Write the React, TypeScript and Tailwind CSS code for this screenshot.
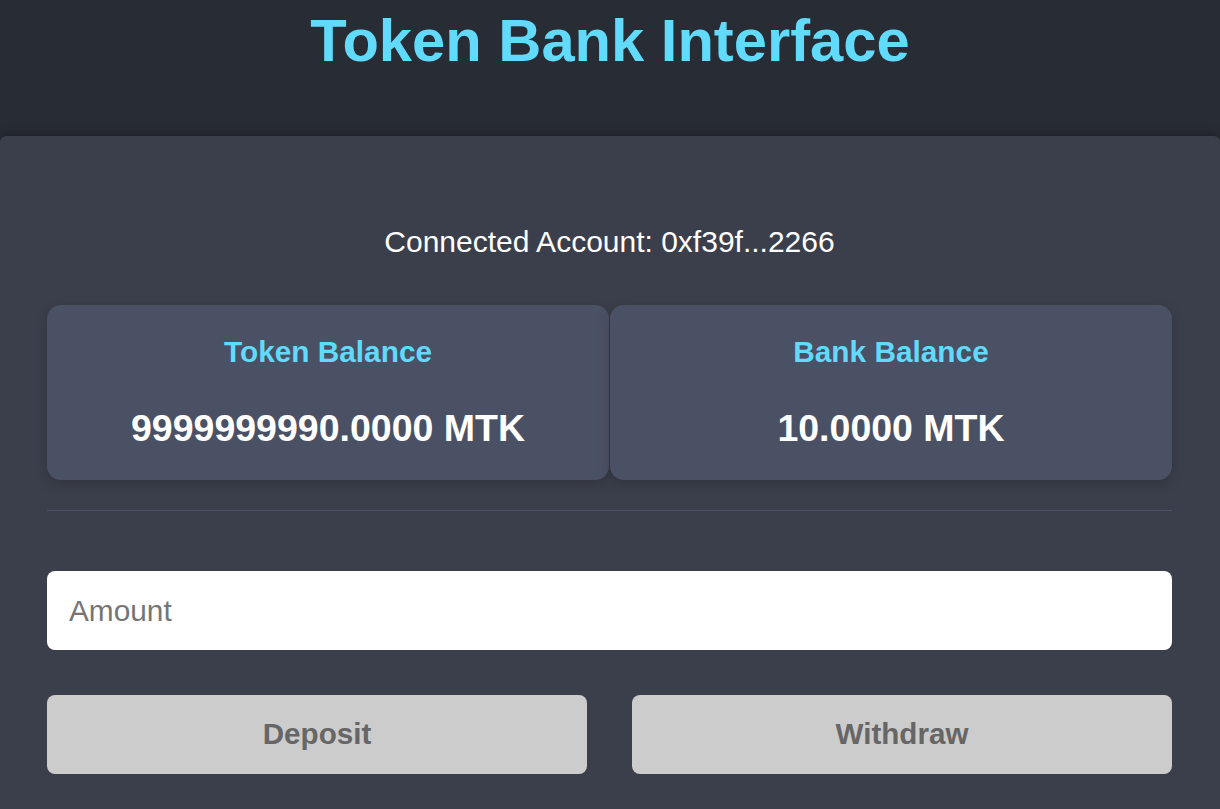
import React, { useState } from "react";

const BalanceCard = ({ label, value }: { label: string; value: string }) => (
  <div className="h-[175px] rounded-[14px] bg-[#4b5164] pt-[29.6px] text-center shadow-[0_4px_14px_rgba(0,0,0,0.18)]">
    <h3 className="text-[29.8px] leading-[34px] font-bold text-[#61dafb]">{label}</h3>
    <p className="mt-[38.4px] text-[37.5px] leading-[42.5px] font-bold text-white">{value}</p>
  </div>
);

const App = () => {
  const [amount, setAmount] = useState("");

  return (
    <div className="min-h-screen bg-[#282c34] font-['Liberation_Sans',Arial,sans-serif]">
      <header className="h-[136px] pt-[7px] text-center">
        <h1 className="text-[59.7px] leading-[68px] font-bold text-[#61dafb]">Token Bank Interface</h1>
      </header>

      <main className="min-h-[673px] rounded-t-[6px] bg-[#3b3f4b] pl-[47px] pr-[48px] pt-[89px] pb-[35px] shadow-[0_-3px_10px_rgba(0,0,0,0.25)]">
        <p className="text-center text-[30px] leading-[34px] text-white">Connected Account: 0xf39f...2266</p>

        <div className="mt-[46px] grid grid-cols-2 gap-px">
          <BalanceCard label="Token Balance" value="9999999990.0000 MTK" />
          <BalanceCard label="Bank Balance" value="10.0000 MTK" />
        </div>

        <hr className="mt-[30px] border-0 border-t border-[#4b5167]" />

        <input
          type="text"
          value={amount}
          onChange={(e) => setAmount(e.target.value)}
          placeholder="Amount"
          className="mt-[60px] block h-[79px] w-full rounded-[8px] bg-white px-[22px] text-[29.8px] text-[#222] placeholder:text-[#757575] outline-none"
        />

        <div className="mt-[45px] grid grid-cols-2 gap-[45px]">
          <button
            type="button"
            className="h-[79px] rounded-[8px] bg-[#cccccc] text-[29.6px] font-bold text-[#666666]"
          >
            Deposit
          </button>
          <button
            type="button"
            className="h-[79px] rounded-[8px] bg-[#cccccc] text-[29.6px] font-bold text-[#666666]"
          >
            Withdraw
          </button>
        </div>
      </main>
    </div>
  );
};

export default App;
